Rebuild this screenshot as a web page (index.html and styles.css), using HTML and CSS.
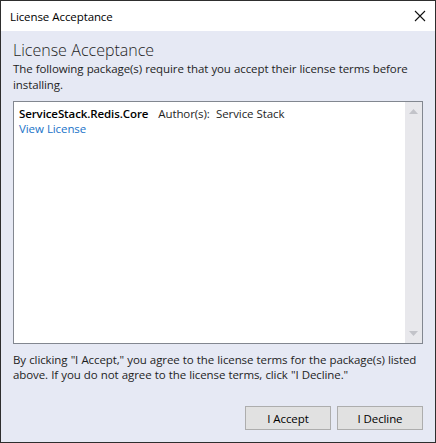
FILE: index.html
```html
<!DOCTYPE html>
<html>
<head>
<meta charset="utf-8">
<link rel="stylesheet" href="styles.css">
</head>
<body>
<div class="window">
  <div class="titlebar">
    <span class="title">License Acceptance</span>
    <svg class="close" width="12" height="12" viewBox="0 0 12 12"><path d="M1 1 L11 11 M11 1 L1 11" stroke="#111" stroke-width="1.1" fill="none"/></svg>
  </div>
  <div class="content">
    <h1 class="heading">License Acceptance</h1>
    <p class="intro">The following package(s) require that you accept their license terms before installing.</p>
    <div class="listbox">
      <div class="items">
        <div class="item">
          <div class="item-line"><span class="pkg">ServiceStack.Redis.Core</span><span class="author">Author(s):&nbsp; Service Stack</span></div>
          <a class="link">View License</a>
        </div>
      </div>
      <div class="scrollbar">
        <svg class="arrow" width="9" height="5" viewBox="0 0 9 5"><path d="M0 5 L4.5 0 L9 5 Z" fill="#c2c3c9"/></svg>
        <svg class="arrow" width="9" height="5" viewBox="0 0 9 5"><path d="M0 0 L4.5 5 L9 0 Z" fill="#c2c3c9"/></svg>
      </div>
    </div>
    <p class="footer-text">By clicking "I Accept," you agree to the license terms for the package(s) listed above. If you do not agree to the license terms, click "I Decline."</p>
    <div class="buttons">
      <button class="btn">I Accept</button>
      <button class="btn">I Decline</button>
    </div>
  </div>
</div>
</body>
</html>
```

FILE: styles.css
```css
* { box-sizing: border-box; }
html, body { margin: 0; padding: 0; background: #fff; }
body { font-family: "Open Sans", "Noto Sans", sans-serif; font-size: 11.5px; letter-spacing: -0.1px; word-spacing: 0.3px; color: #1e1e1e; }
.window {
  width: 436px; height: 443px;
  border: 1px solid #2e2e2e;
  display: flex; flex-direction: column;
  background: #e6e9f4;
}
.titlebar {
  height: 30px; flex: none;
  background: #fff;
  display: flex; align-items: center; justify-content: space-between;
  padding: 0 9px 0 9px;
}
.title { font-size: 11.5px; color: #000; }
.content {
  flex: 1;
  display: flex; flex-direction: column;
  padding: 8px 12px 12px 12px;
}
.heading {
  margin: 0; font-weight: 300; font-size: 16px; letter-spacing: 0; line-height: 22px; color: #1e1e1e;
}
.intro { margin: 0; line-height: 16px; }
.listbox {
  margin-top: 8px;
  height: 243px; flex: none;
  border: 1px solid #828790;
  background: #fff;
  display: flex;
}
.items { flex: 1; padding: 3px 5px; }
.item-line { line-height: 17px; }
.pkg { font-weight: 600; color: #000; }
.author { margin-left: 10px; }
.link { display: block; color: #1a73c8; line-height: 13px; }
.scrollbar {
  width: 17px; flex: none;
  background: #e8e8ec;
  display: flex; flex-direction: column; justify-content: space-between; align-items: center;
  padding: 7px 0 7px 0;
}
.footer-text { margin: 8px 0 0 0; line-height: 15px; }
.buttons {
  margin-top: auto;
  display: flex; justify-content: flex-end; gap: 6px;
}
.btn {
  width: 86px; height: 24px;
  font-family: inherit; font-size: 11.5px; letter-spacing: -0.1px; color: #000;
  background: #e1e1e1; border: 1px solid #adadad;
  padding: 0;
}
```
